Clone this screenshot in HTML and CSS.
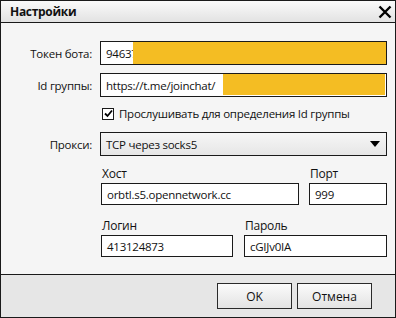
FILE: index.html
```html
<!DOCTYPE html>
<html lang="ru">
<head>
    <meta charset="UTF-8">
    <title>Настройки</title>
    <link rel="stylesheet" href="styles.css">
</head>
<body>
    <div class="dialog">
        <div class="titlebar">
            <span class="title">Настройки</span>
            <svg class="close" width="14" height="14" viewBox="0 0 14 14">
                <path d="M1.5 1.5 L12.5 12.5 M12.5 1.5 L1.5 12.5" stroke="#000" stroke-width="2.4"/>
            </svg>
        </div>

        <div class="content">
            <div class="row">
                <label class="row-label">Токен бота:</label>
                <div class="field wide">
                    <span class="value">94637</span>
                    <span class="mask mask-token"></span>
                </div>
            </div>
            <div class="row">
                <label class="row-label">Id группы:</label>
                <div class="field wide">
                    <span class="value">https://t.me/joinchat/</span>
                    <span class="mask mask-group"></span>
                </div>
            </div>
            <div class="check-row">
                <span class="checkbox">
                    <svg width="9" height="9" viewBox="0 0 9 9">
                        <path d="M1 4.5 L3.5 7 L8 1.5" fill="none" stroke="#000" stroke-width="1.8"/>
                    </svg>
                </span>
                <span>Прослушивать для определения Id группы</span>
            </div>
            <div class="row">
                <label class="row-label">Прокси:</label>
                <div class="select wide">
                    <span class="value">TCP через socks5</span>
                    <span class="arrow"></span>
                </div>
            </div>

            <div class="pair">
                <div class="col col-host">
                    <label>Хост</label>
                    <div class="field small"><span class="value">orbtl.s5.opennetwork.cc</span></div>
                </div>
                <div class="col col-port">
                    <label>Порт</label>
                    <div class="field small"><span class="value">999</span></div>
                </div>
            </div>
            <div class="pair pair-login">
                <div class="col col-login">
                    <label>Логин</label>
                    <div class="field small"><span class="value">413124873</span></div>
                </div>
                <div class="col col-pass">
                    <label>Пароль</label>
                    <div class="field small"><span class="value">cGIJv0IA</span></div>
                </div>
            </div>
        </div>

        <div class="footer">
            <button class="btn btn-ok">OK</button>
            <button class="btn">Отмена</button>
        </div>
    </div>
</body>
</html>
```

FILE: styles.css
```css
* {
    margin: 0;
    padding: 0;
    box-sizing: border-box;
}

body {
    background-color: #ffffff;
    font-family: "Open Sans", "Noto Sans", sans-serif;
    font-size: 11.5px;
    letter-spacing: -0.25px;
    color: #111;
}

.dialog {
    width: 396px;
    height: 318px;
    border: 1px solid #1a1a1a;
    background-color: #f5f5f5;
    display: flex;
    flex-direction: column;
}

.titlebar {
    height: 22px;
    flex-shrink: 0;
    border-bottom: 1px solid #1a1a1a;
    background: linear-gradient(#fafafa, #e2e2e2);
    display: flex;
    align-items: center;
    justify-content: space-between;
    padding: 0 3px 0 9px;
}

.title {
    font-weight: bold;
    font-size: 12px;
    letter-spacing: -0.3px;
}

.content {
    flex: 1;
    padding: 18px 0 0 0;
}

.row {
    display: flex;
    align-items: center;
    margin-bottom: 8px;
}

.row-label {
    width: 91px;
    text-align: right;
    margin-right: 8px;
}

.field,
.select {
    position: relative;
    height: 24px;
    border: 1px solid #1a1a1a;
    background-color: #fff;
    display: flex;
    align-items: center;
    padding-left: 5px;
    overflow: hidden;
    white-space: nowrap;
}

.wide {
    width: 287px;
}

.mask {
    position: absolute;
    top: 0;
    right: -1px;
    bottom: 1px;
    background-color: #f4bd23;
}

.mask-token {
    left: 32px;
    top: -1px;
    bottom: -1px;
}

.mask-group {
    left: 122px;
    right: 1px;
    top: -1px;
}

.check-row {
    height: 17px;
    display: flex;
    align-items: center;
    gap: 5px;
    margin: 3px 0 10px 101px;
}

.checkbox {
    width: 12px;
    height: 12px;
    border: 1px solid #1a1a1a;
    background-color: #fff;
    display: flex;
    align-items: center;
    justify-content: center;
}

.select {
    background: linear-gradient(#f6f6f6, #e6e6e6);
    justify-content: space-between;
    padding-right: 6px;
}

.arrow {
    width: 0;
    height: 0;
    border-left: 5px solid transparent;
    border-right: 5px solid transparent;
    border-top: 6px solid #000;
}

.pair {
    display: flex;
    margin-left: 100px;
    margin-top: 2px;
}

.pair-login {
    margin-top: 11px;
}

.col label {
    display: block;
    height: 19px;
    line-height: 19px;
    font-size: 12px;
    padding-left: 1px;
}

.field.small {
    height: 22px;
}

.col-host { width: 198px; margin-right: 10px; }
.col-port { width: 78px; }
.col-login { width: 132px; margin-right: 11px; }
.col-pass { width: 143px; }

.footer {
    height: 43px;
    flex-shrink: 0;
    border-top: 1px solid #1a1a1a;
    background-color: #e6e6e6;
    display: flex;
    justify-content: flex-end;
    align-items: flex-start;
    gap: 5px;
    padding: 8px 23px 0 0;
}

.btn {
    width: 75px;
    height: 26px;
    border: 1px solid #2a2a2a;
    background: linear-gradient(#fbfbfb, #e3e3e3);
    font-family: "Open Sans", "Noto Sans", sans-serif;
    font-size: 12px;
    color: #111;
}
```
